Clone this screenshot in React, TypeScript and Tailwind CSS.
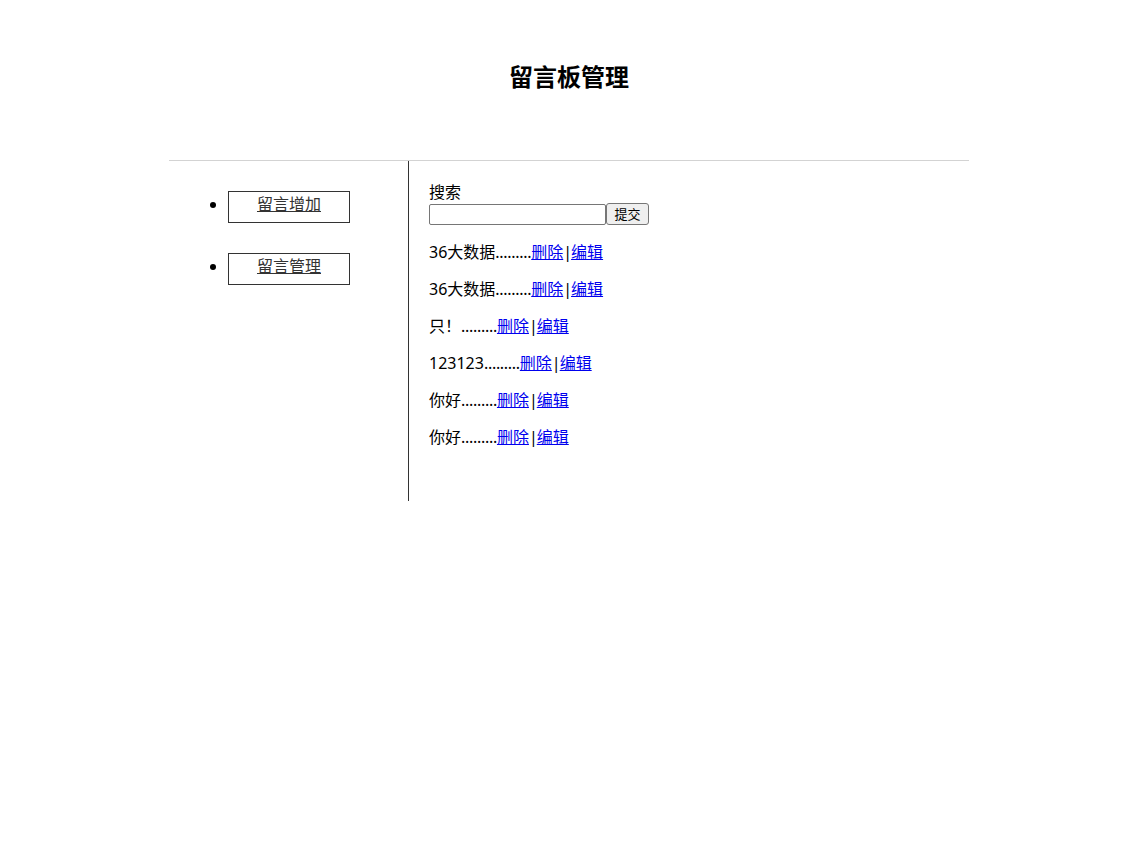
import React from 'react';

const messages = ['36大数据', '36大数据', '只！', '123123', '你好', '你好'];

const App: React.FC = () => {
  return (
    <div className="min-h-[841px] bg-white text-black font-['Noto_Sans','Noto_Sans_CJK_SC',sans-serif] text-[16px]">
      <header className="h-[160px] pt-[61px] text-center">
        <h1 className="text-[24px] font-bold leading-[32px]">留言板管理</h1>
      </header>

      <div className="w-[800px] mx-auto border-t border-[#d3d3d3] flex">
        {/* left menu */}
        <div className="w-[240px] h-[340px] border-r border-[#333]">
          <ul className="list-disc pl-[59px] pt-[30px]">
            <li className="mb-[30px]">
              <a
                href="#"
                className="block w-[122px] border border-[#333] text-[#333] underline text-center leading-[21px] pt-[2px] pb-[7px]"
              >
                留言增加
              </a>
            </li>
            <li>
              <a
                href="#"
                className="block w-[122px] border border-[#333] text-[#333] underline text-center leading-[21px] pt-[2px] pb-[7px]"
              >
                留言管理
              </a>
            </li>
          </ul>
        </div>

        {/* right content */}
        <div className="flex-1 pl-[20px] pt-[21px]">
          <div className="leading-[21px]">搜索</div>
          <form className="flex items-center h-[22px]" onSubmit={(e) => e.preventDefault()}>
            <input
              type="text"
              className="w-[177px] h-[21px] border border-[#767676] rounded-[2px] px-[2px] text-[13px] outline-none"
            />
            <button
              type="submit"
              className="w-[43px] h-[22px] border border-[#767676] rounded-[3px] bg-[#efefef] text-[13px] leading-[18px]"
            >
              提交
            </button>
          </form>
          <div className="mt-[17px]">
            {messages.map((m, i) => (
              <p key={i} className="leading-[21px] mb-[16px]">
                {m}
                <span className="tracking-[-0.3px]">.........</span>
                <a href="#" className="text-[#0000ee] underline">删除</a>
                <span className="tracking-[-1px]">|</span>
                <a href="#" className="text-[#0000ee] underline">编辑</a>
              </p>
            ))}
          </div>
        </div>
      </div>
    </div>
  );
};

export default App;
